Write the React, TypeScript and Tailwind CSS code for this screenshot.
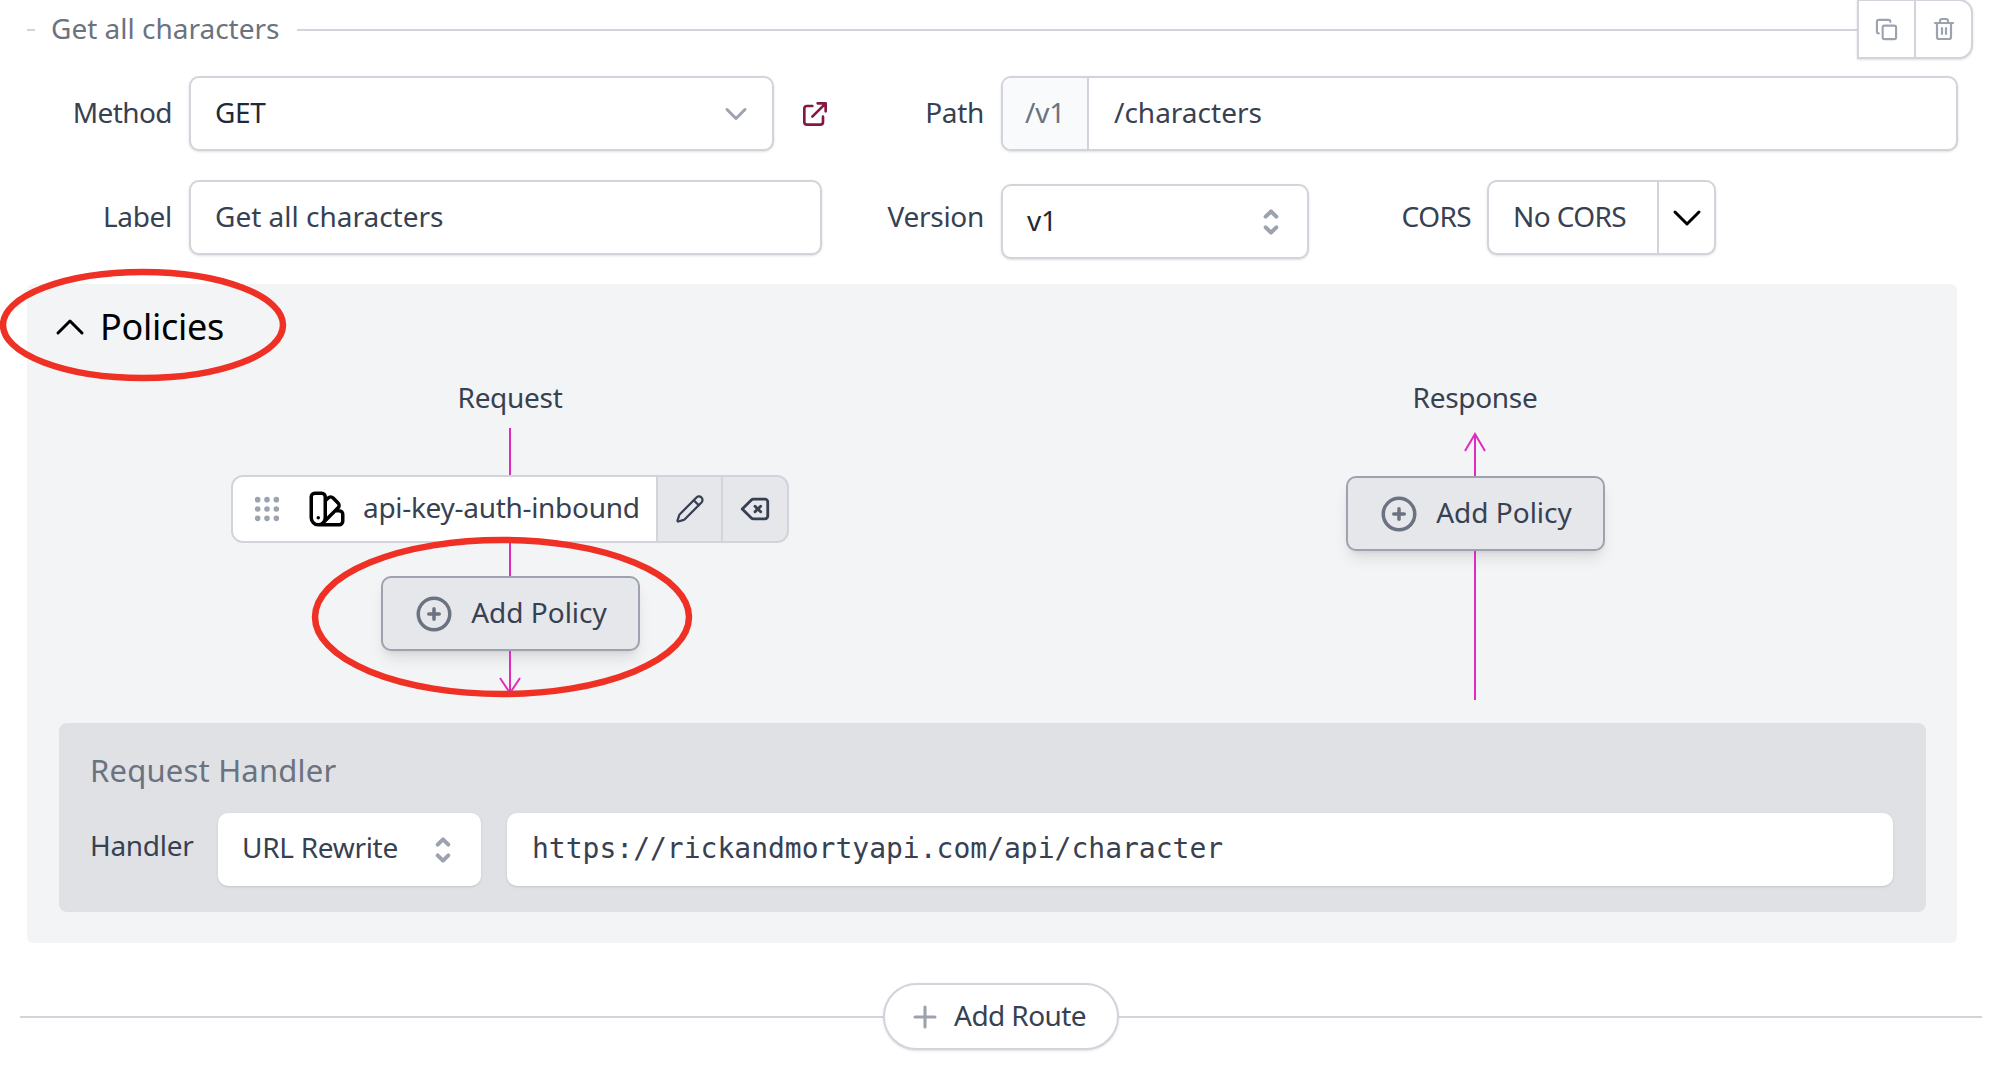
import { ChevronDown, ChevronUp, Copy, Grip, Pencil, Plus, Trash2 } from 'lucide-react'
import {
  HiOutlineBackspace,
  HiOutlineColorSwatch,
  HiOutlineExternalLink,
  HiOutlinePlusCircle,
} from 'react-icons/hi'

const field = 'bg-white border-2 border-[#d1d5db] rounded-[10px] shadow-sm'

// pb nudges the text up so it sits where the reference font sits in the box
function Txt({ className = '', children }: { className?: string; children: React.ReactNode }) {
  return <span className={`pb-[4px] whitespace-nowrap ${className}`}>{children}</span>
}

function FieldLabel({ width, className = '', children }: { width: string; className?: string; children: React.ReactNode }) {
  return <div className={`${width} shrink-0 pb-[4px] text-right text-[#374151] ${className}`}>{children}</div>
}

function Selector() {
  return (
    <svg className="w-[32px] h-[36px] text-[#9ca3af]" viewBox="0 0 24 24" fill="none" stroke="currentColor" strokeWidth="3" strokeLinecap="round" strokeLinejoin="round">
      <path d="M8 8l4-4 4 4M16 16l-4 4-4-4" />
    </svg>
  )
}

function AddPolicy() {
  return (
    <button className="w-[259px] h-[75px] shrink-0 flex items-center justify-center gap-[16px] bg-[#e5e7eb] border-2 border-[#9ca3af] rounded-[10px] shadow-lg text-[#374151] tracking-normal">
      <HiOutlinePlusCircle className="w-[42px] h-[42px] text-[#6b7280]" />
      <Txt>Add Policy</Txt>
    </button>
  )
}

export default function App() {
  return (
    <div className="relative w-[1996px] h-[1076px] overflow-hidden bg-white text-[28px] leading-[40px] font-['Noto_Sans',sans-serif] tracking-[-0.3px]">
      {/* route title */}
      <div className="flex items-center h-[59px] pl-[27px]">
        <div className="w-[8px] h-[2px] bg-[#d1d5db]" />
        <div className="ml-[16px] pb-[4px] text-[#6b7280] tracking-normal">Get all characters</div>
        <div className="flex-1 ml-[18px] h-[2px] bg-[#d1d5db]" />
        <div className="flex w-[116px] h-[60px] mr-[23px] -mt-px bg-white border-2 border-[#d1d5db] rounded-r-[14px] shadow-sm">
          <div className="w-[57px] flex items-center justify-center border-r-2 border-[#d1d5db]">
            <Copy className="w-[23px] h-[23px] text-[#9ca3af]" strokeWidth={2.2} />
          </div>
          <div className="flex-1 flex items-center justify-center">
            <Trash2 className="w-[24px] h-[24px] text-[#9ca3af]" strokeWidth={2.2} />
          </div>
        </div>
      </div>

      {/* method and path */}
      <div className="flex items-center h-[75px] mt-[17px]">
        <FieldLabel width="w-[172px]" className="tracking-[-0.6px]">Method</FieldLabel>
        <div className={`${field} ml-[17px] w-[585px] h-full flex items-center justify-between pl-[24px] pr-[18px] text-[#1f2937]`}>
          <Txt>GET</Txt>
          <ChevronDown className="w-[36px] h-[36px] text-[#9ca3af]" strokeWidth={2} />
        </div>
        <HiOutlineExternalLink className="ml-[25px] w-[32px] h-[32px] text-[#831843]" />
        <FieldLabel width="w-[153px]">Path</FieldLabel>
        <div className={`${field} ml-[17px] flex-1 mr-[38px] h-full flex overflow-hidden`}>
          <div className="w-[86px] flex items-center justify-center bg-[#f9fafb] border-r-2 border-[#d1d5db] text-[#6b7280]">
            <Txt>/v1</Txt>
          </div>
          <div className="flex-1 flex items-center pl-[25px] text-[#374151] tracking-normal">
            <Txt>/characters</Txt>
          </div>
        </div>
      </div>

      {/* label, version and cors */}
      <div className="flex items-start h-[79px] mt-[29px]">
        <div className="flex items-center h-[75px]">
          <FieldLabel width="w-[172px]">Label</FieldLabel>
        </div>
        <div className={`${field} ml-[17px] w-[633px] h-[75px] flex items-center pl-[24px] text-[#374151] tracking-normal`}>
          <Txt>Get all characters</Txt>
        </div>
        <div className="flex items-center h-[75px]">
          <FieldLabel width="w-[162px]">Version</FieldLabel>
        </div>
        <div className={`${field} ml-[17px] mt-[4px] w-[308px] h-[75px] flex items-center justify-between pl-[24px] pr-[20px] text-[#1f2937]`}>
          <Txt>v1</Txt>
          <Selector />
        </div>
        <div className="flex items-center h-[75px]">
          <FieldLabel width="w-[162px]" className="tracking-[-0.6px]">CORS</FieldLabel>
        </div>
        <div className={`${field} ml-[16px] w-[229px] h-[75px] flex`}>
          <div className="w-[170px] flex items-center pl-[24px] border-r-2 border-[#d1d5db] text-[#374151] tracking-[-0.6px]">
            <Txt>No CORS</Txt>
          </div>
          <div className="flex-1 flex items-center justify-center">
            <ChevronDown className="w-[48px] h-[48px] text-black shrink-0" strokeWidth={1.5} />
          </div>
        </div>
      </div>

      {/* policies panel */}
      <div className="mt-[25px] ml-[27px] mr-[39px] pl-[32px] pr-[31px] pb-[31px] bg-[#f3f4f6] rounded-[6px]">
        <div className="h-[86px] -ml-[13px] flex items-center text-[36px] text-black">
          <ChevronUp className="w-[48px] h-[48px]" strokeWidth={1.5} />
          <span className="ml-[6px]">Policies</span>
        </div>

        <div className="flex justify-between h-[353px]">
          <div className="w-[902px] flex flex-col items-center">
            <div className="h-[58px] flex items-center text-[#374151]">
              <Txt className="pb-[2px]">Request</Txt>
            </div>
            <div className="w-[2px] h-[47px] bg-[#e02bc0]" />
            <div className="flex w-[558px] h-[68px] shrink-0 bg-[#e5e7eb] border-2 border-[#d1d5db] rounded-[12px]">
              <div className="w-[423px] flex items-center pl-[18px] bg-white rounded-l-[10px] text-[#374151]">
                <Grip className="w-[32px] h-[32px] text-[#9ca3af]" strokeWidth={2.2} />
                <HiOutlineColorSwatch className="ml-[23px] w-[42px] h-[42px] text-black" />
                <Txt className="ml-[15px]">api-key-auth-inbound</Txt>
              </div>
              <div className="w-[67px] flex items-center justify-center border-x-2 border-[#d1d5db] text-[#374151]">
                <Pencil className="w-[30px] h-[30px]" strokeWidth={1.8} />
              </div>
              <div className="flex-1 flex items-center justify-center text-[#374151]">
                <HiOutlineBackspace className="w-[34px] h-[34px]" />
              </div>
            </div>
            <div className="w-[2px] h-[33px] bg-[#e02bc0]" />
            <AddPolicy />
            <svg className="w-[24px] h-[43px] shrink-0" viewBox="0 0 24 43" fill="none" stroke="#e02bc0" strokeWidth="2">
              <path d="M12 0V42M2 27L12 42L22 27" />
            </svg>
          </div>

          <div className="w-[902px] flex flex-col items-center">
            <div className="h-[58px] flex items-center text-[#374151]">
              <Txt className="pb-[2px]">Response</Txt>
            </div>
            <svg className="w-[24px] h-[48px] shrink-0" viewBox="0 0 24 48" fill="none" stroke="#e02bc0" strokeWidth="2">
              <path d="M12 48V6M2 23L12 6L22 23" />
            </svg>
            <AddPolicy />
            <div className="w-[2px] h-[149px] bg-[#e02bc0]" />
          </div>
        </div>

        <div className="pt-[27px] pb-[26px] pl-[31px] pr-[33px] bg-[#e0e1e5] rounded-[8px]">
          <div className="text-[#6b7280] text-[31px] tracking-[0.2px]">Request Handler</div>
          <div className="flex items-center mt-[23px] h-[73px]">
            <div className="w-[128px] pb-[9px] text-[#374151]">Handler</div>
            <div className="w-[263px] h-full flex items-center justify-between pl-[24px] pr-[22px] bg-white rounded-[10px] shadow-sm text-[#374151]">
              <Txt className="pb-[6px]">URL Rewrite</Txt>
              <Selector />
            </div>
            <div className="ml-[26px] flex-1 h-full flex items-center pl-[25px] bg-white rounded-[10px] shadow-sm text-[#374151] font-['DejaVu_Sans_Mono',monospace] tracking-normal">
              <span className="pb-[2px]">https://rickandmortyapi.com/api/character</span>
            </div>
          </div>
        </div>
      </div>

      {/* add route */}
      <div className="flex items-center h-[67px] mt-[40px] ml-[20px] mr-[14px]">
        <div className="flex-1 h-[2px] bg-[#d1d5db]" />
        <button className="w-[236px] h-full flex items-center justify-center gap-[12px] pr-[8px] bg-white border-2 border-[#d1d5db] rounded-full shadow-sm text-[#374151] tracking-[-0.6px]">
          <Plus className="w-[34px] h-[34px] text-[#9ca3af]" strokeWidth={2.2} />
          <Txt>Add Route</Txt>
        </button>
        <div className="flex-1 h-[2px] bg-[#d1d5db]" />
      </div>

      {/* red annotations drawn over the screenshot */}
      <svg className="absolute left-0 top-[268px] w-[290px] h-[116px]" viewBox="0 0 290 116" fill="none" stroke="#ee3124" strokeWidth="6.5">
        <ellipse cx="143" cy="57" rx="140" ry="53" />
      </svg>
      <svg className="absolute left-[310px] top-[536px] w-[384px] h-[164px]" viewBox="0 0 384 164" fill="none" stroke="#ee3124" strokeWidth="6.5">
        <ellipse cx="192" cy="81" rx="187" ry="77" />
      </svg>
    </div>
  )
}
